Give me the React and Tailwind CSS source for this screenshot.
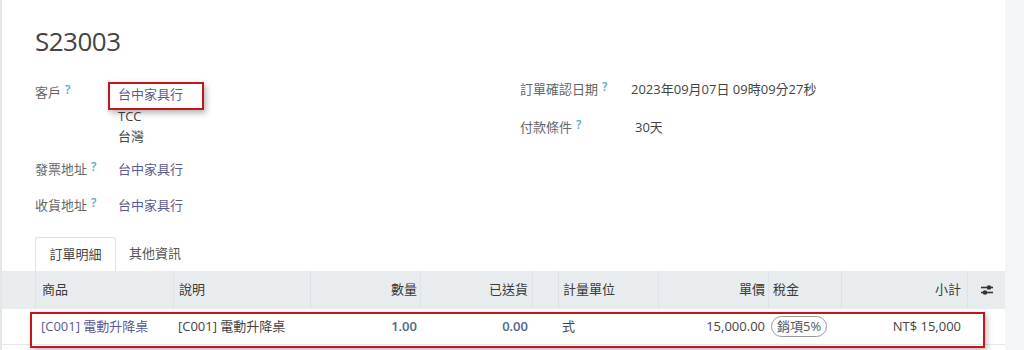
import React from "react";

const F = { fontFamily: '"Open Sans", "Noto Sans CJK TC", sans-serif' };

function Q() {
  return <sup className="ml-[4px] text-[12px] font-semibold text-[#5aa9d2] relative top-[-3px]">?</sup>;
}

function SlidersIcon() {
  return (
    <svg width="14" height="12" viewBox="0 0 14 12">
      <line x1="1" y1="3.5" x2="13" y2="3.5" stroke="#333" strokeWidth="1.6" />
      <line x1="1" y1="8.5" x2="13" y2="8.5" stroke="#333" strokeWidth="1.6" />
      <circle cx="9" cy="3.5" r="2.3" fill="#333" />
      <circle cx="5" cy="8.5" r="2.3" fill="#333" />
    </svg>
  );
}

export default function App() {
  return (
    <div className="w-[1024px] h-[350px] flex overflow-hidden bg-white text-[13px]" style={F}>
      <div className="w-[2px] bg-[#e4e6ea]" />
      <div className="w-[1003px] relative bg-white flex flex-col">
        <div className="pl-[33px] pt-[23px] pb-[3px] text-[26px] leading-[36px] text-[#444] tracking-[-0.5px]">S23003</div>

        <div className="flex pl-[33px] mt-[20px]">
          <div className="w-[485px] flex flex-col">
            <div className="flex">
              <div className="w-[83px] text-[#666] leading-[20px]">客戶<Q /></div>
              <div className="flex flex-col leading-[20px] pt-[2px]">
                <span className="text-[#5d5a92]">台中家具行</span>
                <span className="text-[#444] mt-[2px]">TCC</span>
                <span className="text-[#444]">台灣</span>
              </div>
            </div>
            <div className="flex mt-[13px] leading-[20px]">
              <div className="w-[83px] text-[#666]">發票地址<Q /></div>
              <span className="text-[#5d5a92]">台中家具行</span>
            </div>
            <div className="flex mt-[16px] leading-[20px]">
              <div className="w-[83px] text-[#666]">收貨地址<Q /></div>
              <span className="text-[#5d5a92]">台中家具行</span>
            </div>
          </div>
          <div className="flex flex-col">
            <div className="flex leading-[20px] -mt-[3px]">
              <div className="w-[111px] text-[#666]">訂單確認日期<Q /></div>
              <span className="text-[#444]">2023年09月07日 09時09分27秒</span>
            </div>
            <div className="flex leading-[20px] mt-[18px]">
              <div className="w-[115px] text-[#666]">付款條件<Q /></div>
              <span className="text-[#444]">30天</span>
            </div>
          </div>
        </div>

        <div className="flex pl-[33px] mt-[22px] h-[34px]">
          <div className="w-[81px] border border-b-0 border-[#dee2e6] rounded-t-[3px] flex items-center justify-center text-[#444]">訂單明細</div>
          <div className="px-[13px] flex items-center text-[#555]">其他資訊</div>
        </div>

        <div className="flex h-[38px] bg-[#e9ecef] text-[#3a3a3a] items-stretch">
          <div className="w-[33px]" />
          <div className="w-[138px] border-l border-[#dee2e6] flex items-center pl-[6px]">商品</div>
          <div className="w-[137px] border-l border-[#dee2e6] flex items-center pl-[5px]">說明</div>
          <div className="w-[110px] border-l border-[#dee2e6] flex items-center justify-end pr-[3px]">數量</div>
          <div className="w-[112px] border-l border-[#dee2e6] flex items-center justify-end pr-[4px]">已送貨</div>
          <div className="w-[26px] border-l border-[#dee2e6]" />
          <div className="w-[100px] border-l border-[#dee2e6] flex items-center pl-[4px]">計量單位</div>
          <div className="w-[110px] border-l border-[#dee2e6] flex items-center justify-end pr-[3px]">單價</div>
          <div className="w-[73px] border-l border-[#dee2e6] flex items-center pl-[4px]">稅金</div>
          <div className="w-[126px] border-l border-[#dee2e6] flex items-center justify-end pr-[6px]">小計</div>
          <div className="flex-1 border-l border-[#dee2e6] flex items-center justify-center"><SlidersIcon /></div>
        </div>

        <div className="flex h-[36px] text-[#444] items-center border-b border-[#e5e7eb]">
          <div className="w-[33px]" />
          <div className="w-[138px] pl-[6px] text-[#5d5a92]">[C001] 電動升降桌</div>
          <div className="w-[137px] pl-[5px] text-[#444]">[C001] 電動升降桌</div>
          <div className="w-[110px] text-right pr-[3px] font-semibold text-[#4b6889]">1.00</div>
          <div className="w-[112px] text-right pr-[4px] font-semibold text-[#4b6889]">0.00</div>
          <div className="w-[26px]" />
          <div className="w-[100px] pl-[4px]">式</div>
          <div className="w-[110px] text-right pr-[3px]">15,000.00</div>
          <div className="w-[73px] pl-[3px]">
            <span className="inline-flex items-center h-[21px] px-[5px] border border-[#999] rounded-full text-[13px] text-[#555]">銷項5%</span>
          </div>
          <div className="w-[126px] text-right pr-[6px]">NT$ 15,000</div>
          <div className="flex-1" />
        </div>

        <div className="absolute left-[106px] top-[82px] w-[96px] h-[28px] border-2 border-[#c0161c] shadow-[2px_3px_6px_rgba(0,0,0,0.3)]" />
        <div className="absolute left-[28px] top-[312px] w-[955px] h-[36px] border-2 border-[#c0161c] shadow-[2px_3px_6px_rgba(0,0,0,0.25)]" />
      </div>
      <div className="flex-1 bg-[#f4f5f7]" />
    </div>
  );
}
